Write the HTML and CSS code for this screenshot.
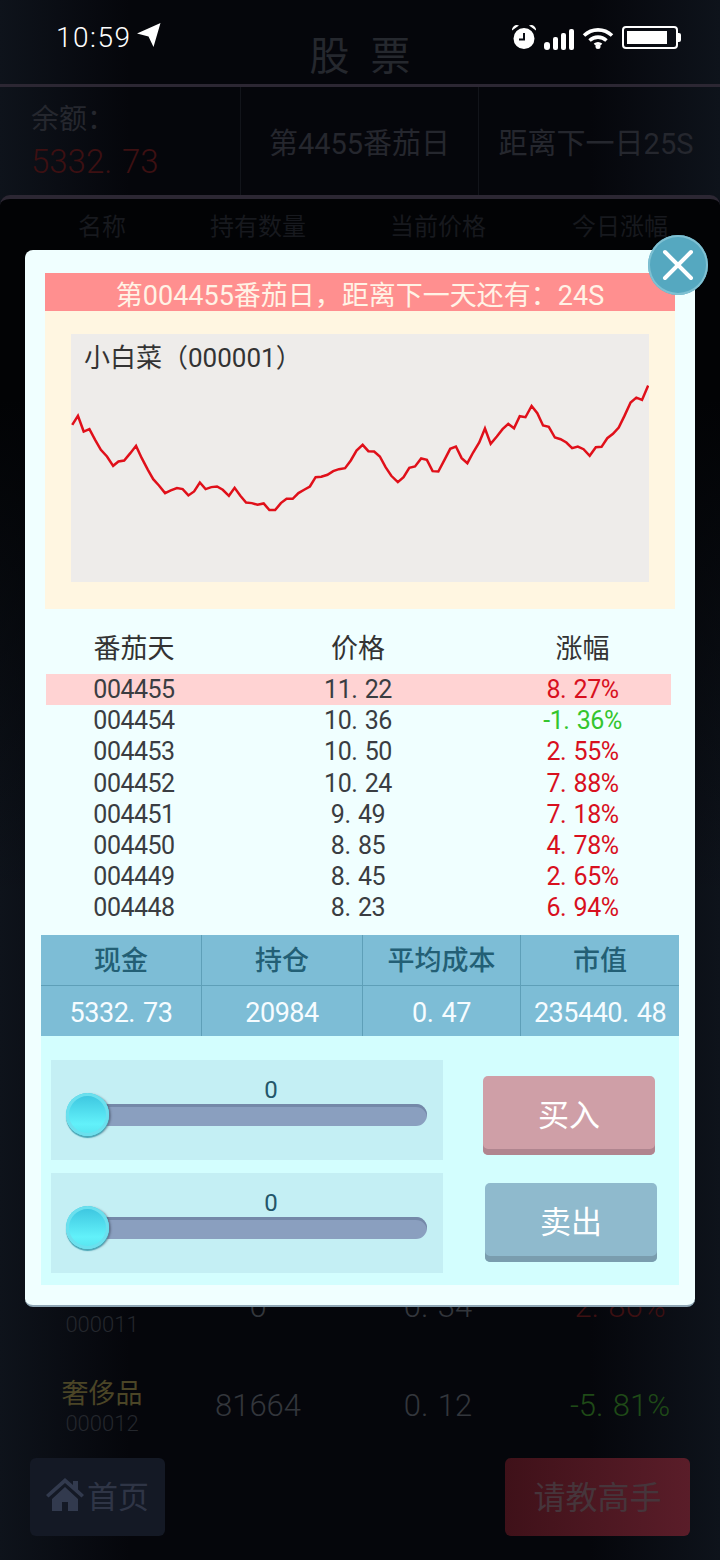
FILE: index.html
```html
<!DOCTYPE html>
<html lang="zh-CN">
<head>
    <meta charset="UTF-8">
    <meta name="viewport" content="width=device-width, initial-scale=1.0">
    <title>股票</title>
    <link rel="stylesheet" href="styles.css">
</head>
<body>
<div id="page">
    <div class="header">
        <div class="status">
            <div class="clock">
                <span>10:59</span>
                <svg width="24" height="24" viewBox="0 0 24 24"><path d="M23.500 0 0 10.500 11.500 13.500 16.500 24Z" fill="#fff"/></svg>
            </div>
            <div class="status-icons">
                <svg class="alarm" width="26" height="27" viewBox="0 0 26 27">
                    <circle cx="13" cy="15.500" r="9" fill="#fff" stroke="#fff" stroke-width="3"/>
                    <path d="M1 7.500A5 5 0 0 1 8 2.500ZM25 7.500A5 5 0 0 0 18 2.500Z" fill="#fff"/>
                    <path d="M13 10v6.500H8" fill="none" stroke="#0a0c14" stroke-width="2"/>
                </svg>
                <svg width="31" height="23" viewBox="0 0 31 23" fill="#fff">
                    <rect x="0" y="15" width="6" height="8" rx="3"/>
                    <rect x="9" y="10" width="5" height="13" rx="2"/>
                    <rect x="17" y="6" width="5" height="17" rx="2"/>
                    <rect x="25" y="2" width="5" height="21" rx="2"/>
                </svg>
                <svg width="32" height="23" viewBox="0 0 32 23" fill="none" stroke="#fff" stroke-width="3.600">
                    <path d="M2 8.500C10 1 22 1 30 8.500"/>
                    <path d="M7.500 13.500C12.500 9 19.500 9 24.500 13.500"/>
                    <circle cx="16" cy="19.500" r="2.500" fill="#fff" stroke="none"/>
                    <path d="M12.500 17.500C14.500 16 17.500 16 19.500 17.500" stroke-width="2.500"/>
                </svg>
                <div class="battery"><div class="battery-level"></div></div>
            </div>
        </div>
        <h1>股 票</h1>
    </div>

    <div class="info">
        <div class="info-cell balance">
            <div>余额&#xFF1A;</div>
            <div class="balance-num num">5332<span class="pt">.</span>73</div>
        </div>
        <div class="info-cell">第4455番茄日</div>
        <div class="info-cell next-day">距离下一日25S</div>
    </div>

    <div class="panel">
        <div class="list-head">
            <div>名称</div>
            <div>持有数量</div>
            <div>当前价格</div>
            <div>今日涨幅</div>
        </div>
        <div class="list">
            <div class="list-row">
                <div class="stock"><div class="stock-name">水果</div><div class="stock-code">000011</div></div>
                <div class="num">0</div>
                <div class="num">0<span class="pt">.</span>34</div>
                <div class="num up">2<span class="pt">.</span>86%</div>
            </div>
            <div class="list-row">
                <div class="stock"><div class="stock-name">奢侈品</div><div class="stock-code">000012</div></div>
                <div class="num">81664</div>
                <div class="num">0<span class="pt">.</span>12</div>
                <div class="num down">-5<span class="pt">.</span>81%</div>
            </div>
        </div>
        <div class="footer">
            <div class="home-btn">
                <svg width="38" height="33" viewBox="0 0 38 33" fill="#323a4e"><path d="M19 0 0 17l2.500 2.500L19 5l16.500 14.500L38 17l-6-5.500V3h-5v4ZM6 21v12h10v-9h6v9h10V21L19 9Z"/></svg>
                <span>首页</span>
            </div>
            <div class="ask-btn">请教高手</div>
        </div>
    </div>

    <div class="modal">
        <div class="close">
            <svg width="36" height="36" viewBox="0 0 36 36"><path d="M5 5 31 31M31 5 5 31" stroke="#fff" stroke-width="4" stroke-linecap="round"/></svg>
        </div>
        <div class="banner">第004455番茄日&#xFF0C;距离下一天还有&#xFF1A;24S</div>
        <div class="chart-wrap">
            <div class="chart">
                <div class="chart-title">小白菜&#xFF08;000001&#xFF09;</div>
                <svg class="chart-line" viewBox="77 12 1413 745" preserveAspectRatio="none">
                    <polyline fill="none" stroke="#e0101a" stroke-width="2.500" vector-effect="non-scaling-stroke" points="80,285 94,258 108,305 122,298 136,330 150,360 165,380 180,408 193,395 207,392 222,370 236,348 250,385 265,420 278,448 292,467 307,490 321,482 336,475 350,478 364,497 378,485 392,458 406,478 420,472 434,470 448,480 463,498 477,474 491,498 505,518 519,520 533,525 548,521 562,541 576,541 590,520 604,507 619,507 633,490 647,480 661,470 675,442 689,441 704,435 718,424 732,418 747,415 761,392 775,362 790,345 804,364 818,365 832,380 846,412 860,438 876,457 890,442 904,414 918,410 933,386 947,390 961,424 975,425 990,390 1004,357 1018,350 1032,385 1046,400 1060,368 1075,338 1089,296 1103,342 1118,320 1132,298 1146,282 1160,295 1174,259 1188,262 1203,228 1217,250 1231,287 1245,291 1260,323 1274,328 1288,338 1302,355 1316,350 1330,358 1345,378 1360,352 1374,351 1388,325 1402,312 1416,293 1430,258 1445,218 1459,203 1473,210 1488,167"/>
                </svg>
            </div>
        </div>

        <div class="days">
            <div class="days-head"><div>番茄天</div><div>价格</div><div>涨幅</div></div>
            <div class="days-row today"><div>004455</div><div>11<span class="pt">.</span>22</div><div class="up">8<span class="pt">.</span>27%</div></div>
            <div class="days-row"><div>004454</div><div>10<span class="pt">.</span>36</div><div class="green">-1<span class="pt">.</span>36%</div></div>
            <div class="days-row"><div>004453</div><div>10<span class="pt">.</span>50</div><div class="up">2<span class="pt">.</span>55%</div></div>
            <div class="days-row"><div>004452</div><div>10<span class="pt">.</span>24</div><div class="up">7<span class="pt">.</span>88%</div></div>
            <div class="days-row"><div>004451</div><div>9<span class="pt">.</span>49</div><div class="up">7<span class="pt">.</span>18%</div></div>
            <div class="days-row"><div>004450</div><div>8<span class="pt">.</span>85</div><div class="up">4<span class="pt">.</span>78%</div></div>
            <div class="days-row"><div>004449</div><div>8<span class="pt">.</span>45</div><div class="up">2<span class="pt">.</span>65%</div></div>
            <div class="days-row"><div>004448</div><div>8<span class="pt">.</span>23</div><div class="up">6<span class="pt">.</span>94%</div></div>
        </div>

        <div class="stats">
            <div class="stat-head">现金</div>
            <div class="stat-head">持仓</div>
            <div class="stat-head">平均成本</div>
            <div class="stat-head">市值</div>
            <div class="stat-val">5332<span class="pt">.</span>73</div>
            <div class="stat-val">20984</div>
            <div class="stat-val">0<span class="pt">.</span>47</div>
            <div class="stat-val">235440<span class="pt">.</span>48</div>
        </div>

        <div class="trade">
            <div class="trade-row">
                <div class="slider">
                    <div class="slider-val">0</div>
                    <div class="track"><div class="thumb"></div></div>
                </div>
                <div class="btn buy">买入</div>
            </div>
            <div class="trade-row">
                <div class="slider">
                    <div class="slider-val">0</div>
                    <div class="track"><div class="thumb"></div></div>
                </div>
                <div class="btn sell">卖出</div>
            </div>
        </div>
    </div>
</div>
</body>
</html>
```

FILE: styles.css
```css
* {
    box-sizing: border-box;
}

body {
    margin: 0;
    font-family: Roboto, "Noto Sans CJK SC", sans-serif;
}

#page {
    position: relative;
    width: 720px;
    height: 1560px;
    overflow: hidden;
    display: flex;
    flex-direction: column;
    background: linear-gradient(to right, #0e131b, #05060b 18%, #05060b 82%, #0e131b);
}

.pt {
    margin-right: .3em;
}

.num {
    font-size: 31px;
    font-weight: 300;
    color: #33363c;
}

.up {
    color: #d8101e;
}

.green {
    color: #35c52e;
}

/* background page */
.header {
    height: 87px;
    border-bottom: 3px solid #2c2733;
    position: relative;
}

.header h1 {
    margin: 0;
    padding-top: 33px;
    text-align: center;
    font-size: 40px;
    line-height: 48px;
    font-weight: 400;
    word-spacing: 11px;
    color: #25282e;
}

.status {
    position: absolute;
    left: 56px;
    right: 42px;
    top: 22px;
    display: flex;
    justify-content: space-between;
    align-items: center;
}

.clock {
    display: flex;
    align-items: center;
    gap: 5px;
    color: #fff;
    font-size: 28px;
    font-weight: 300;
    letter-spacing: 1.500px;
    line-height: 32px;
}

.clock svg {
    margin-top: -6px;
}

.status-icons {
    display: flex;
    align-items: flex-end;
    gap: 7px;
    height: 27px;
    margin-top: -4px;
}

.battery {
    position: relative;
    width: 56px;
    height: 23px;
    margin-left: 1px;
    margin-bottom: 1px;
    padding: 3px;
    border: 2px solid #fff;
    border-radius: 4px;
}

.battery::after {
    content: "";
    position: absolute;
    right: -5px;
    top: 5px;
    width: 3px;
    height: 9px;
    background: #fff;
    border-radius: 0 2px 2px 0;
}

.battery-level {
    width: 40px;
    height: 100%;
    background: #fff;
}

.info {
    height: 108px;
    display: grid;
    grid-template-columns: 241px 238px 1fr;
    align-items: stretch;
}

.info-cell {
    display: flex;
    align-items: center;
    justify-content: center;
    font-size: 29px;
    color: #25272e;
    border-right: 1px solid #12141a;
}

.info-cell:last-child {
    border-right: none;
}

.next-day {
    padding-right: 7px;
}

.balance {
    flex-direction: column;
    align-items: flex-start;
    padding: 0 0 0 31px;
    font-size: 28px;
    line-height: 42px;
}

.balance-num {
    font-size: 33px;
    color: #3d1012;
}

.panel {
    flex: 1;
    display: flex;
    flex-direction: column;
    background: linear-gradient(#020305, #020305 200px, rgba(2, 3, 5, 0) 700px);
    border-top: 4px solid #2c2733;
    border-radius: 10px 10px 0 0;
}

.list-head {
    display: grid;
    grid-template-columns: 204px 108px 252px 112px;
    padding-top: 12px;
    text-align: center;
    white-space: nowrap;
    font-size: 24px;
    line-height: 32px;
    color: #17191e;
}

.list {
    flex: 1;
    display: flex;
    flex-direction: column;
    justify-content: flex-end;
}

.list-row {
    height: 99px;
    display: grid;
    grid-template-columns: 204px 108px 252px 112px;
    align-items: center;
    text-align: center;
    white-space: nowrap;
}

.list-row .up {
    color: #3d1012;
}

.list-row .down {
    color: #1f4a17;
}

.stock {
    padding-top: 6px;
}

.stock-name {
    font-size: 27px;
    line-height: 30px;
    color: #4b4526;
}

.stock-code {
    font-size: 22px;
    font-weight: 300;
    line-height: 30px;
    color: #24272d;
}

.footer {
    display: flex;
    justify-content: space-between;
    padding: 3px 30px 24px;
}

.home-btn, .ask-btn {
    height: 78px;
    display: flex;
    align-items: center;
    justify-content: center;
    padding-bottom: 5px;
    font-size: 32px;
    border-radius: 6px;
}

.home-btn {
    width: 135px;
    gap: 3px;
    font-size: 31px;
    color: #2f3546;
    background: #141925;
}

.ask-btn {
    width: 185px;
    color: #46353b;
    background: linear-gradient(to right, #3f1119, #5a1d29);
}

/* dialog */
.modal {
    position: absolute;
    left: 25px;
    top: 250px;
    width: 670px;
    height: 1057px;
    padding: 23px 16px 0;
    background: #f0ffff;
    border-radius: 8px;
    border-bottom: 2px solid #8ea6b4;
}

.close {
    position: absolute;
    right: -13px;
    top: -15px;
    width: 60px;
    height: 60px;
    display: flex;
    align-items: center;
    justify-content: center;
    border-radius: 50%;
    background: #55a8c0;
    box-shadow: inset 0 0 0 2px #7fc0d2;
}

.banner {
    margin: 0 4px;
    height: 38px;
    text-align: center;
    line-height: 46px;
    font-size: 27px;
    color: #fff3e6;
    background: #ff8f8f;
}

.chart-wrap {
    margin: 0 4px;
    height: 298px;
    padding: 23px 26px 27px;
    background: #fff6e1;
}

.chart {
    height: 248px;
    display: grid;
    background: #eeecea;
}

.chart-title, .chart-line {
    grid-area: 1 / 1;
}

.chart-title {
    padding: 7px 0 0 13px;
    font-size: 26px;
    line-height: 34px;
    color: #333;
}

.chart-line {
    width: 100%;
    height: 100%;
}

.days {
    margin: 0 8px 0 5px;
    color: #3a3d42;
}

.days-head, .days-row {
    display: grid;
    grid-template-columns: 176px 272px 1fr;
    text-align: center;
}

.days-head {
    height: 65px;
    padding-top: 22px;
    font-size: 27px;
    line-height: 36px;
    color: #333;
}

.days-row {
    height: 31.200px;
    font-size: 25px;
    line-height: 32px;
    letter-spacing: -.5px;
}

.today {
    background: #ffd3d3;
}

.stats {
    margin-top: 11px;
    display: grid;
    grid-template-columns: 161px 161px 158px 158px;
    grid-template-rows: 51px 50px;
    background: #7dbdd6;
    text-align: center;
}

.stat-head, .stat-val {
    border-right: 1px solid #5e9fb8;
}

.stat-head:nth-child(4), .stat-val:nth-child(8) {
    border-right: none;
}

.stat-head {
    border-bottom: 1px solid #5e9fb8;
    font-size: 27px;
    line-height: 52px;
    font-weight: 500;
    color: #235f75;
}

.stat-val {
    font-size: 27px;
    line-height: 54px;
    letter-spacing: -.5px;
    color: #f6fcff;
}

.trade {
    height: 249px;
    padding: 24px 10px;
    display: flex;
    flex-direction: column;
    gap: 13px;
    background: #d3fefe;
}

.trade-row {
    display: flex;
    align-items: flex-start;
}

.slider {
    width: 392px;
    height: 100px;
    padding-top: 16px;
    background: #c4eff4;
}

.slider-val {
    margin-left: 209px;
    width: 22px;
    text-align: center;
    font-size: 24px;
    line-height: 28px;
    color: #23566a;
}

.track {
    position: relative;
    height: 22px;
    margin: 0 16px 0 15px;
    border-radius: 11px;
    background: #8a9fbf;
    box-shadow: inset 0 3px 0 #7488a8;
}

.thumb {
    position: absolute;
    left: 0;
    top: -11px;
    width: 43px;
    height: 43px;
    border-radius: 50%;
    background: linear-gradient(#3bc3de, #62f1fa 72%, #57e2ee);
    box-shadow: inset 0 0 0 3px #6be0ee, 0 2px 1px #4aa8b8, 2px 1px 2px rgba(60, 70, 90, .5);
}

.btn {
    height: 79px;
    display: flex;
    align-items: center;
    justify-content: center;
    padding-bottom: 6px;
    font-size: 31px;
    color: #fff;
    border-radius: 5px;
}

.buy {
    width: 172px;
    margin: 16px 0 0 40px;
    background: #cf9fa7;
    box-shadow: inset 0 -6px 0 #b0858f;
}

.sell {
    width: 172px;
    margin: 10px 0 0 42px;
    background: #8fbacd;
    box-shadow: inset 0 -6px 0 #7a9dae;
}
```
